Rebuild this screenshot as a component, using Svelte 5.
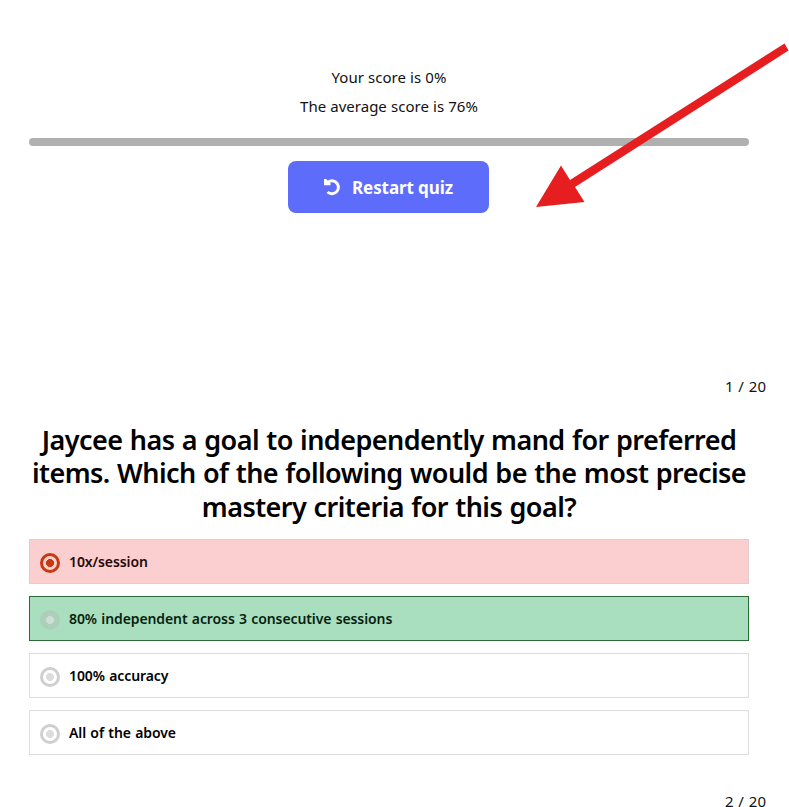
<script>
    let score = 0;
    let average = 76;
    let total = 20;

    let question = [
        'Jaycee has a goal to independently mand for preferred',
        'items. Which of the following would be the most precise',
        'mastery criteria for this goal?'
    ];

    let selected = 0;
    let answers = [
        { text: '10x/session', status: 'wrong' },
        { text: '80% independent across 3 consecutive sessions', status: 'correct' },
        { text: '100% accuracy', status: '' },
        { text: 'All of the above', status: '' }
    ];
</script>

<main class="quiz">
    <section class="results">
        <p>Your score is {score}%</p>
        <p>The average score is {average}%</p>
        <div class="progress"></div>
        <button class="restart">
            <svg width="18" height="18" viewBox="0 0 18 18" aria-hidden="true">
                <path d="M3.400 5.8A6.500 6.500 0 1 1 4.500 14" />
                <path class="head" d="M1 1h2.300l2 2.500 2.200 1.500v2.300H1z" />
            </svg>
            <span>Restart quiz</span>
        </button>
    </section>

    <div class="counter">1 / {total}</div>

    <section class="question">
        <h2>
            {#each question as line}
                <span>{line}</span>
            {/each}
        </h2>
        <div class="answers">
            {#each answers as answer, i}
                <label class="answer {answer.status}">
                    <input type="radio" name="q1" value={i} bind:group={selected} />
                    <span>{answer.text}</span>
                </label>
            {/each}
        </div>
    </section>

    <div class="counter next">2 / {total}</div>

    <svg class="arrow" width="789" height="220" viewBox="0 0 789 220" aria-hidden="true">
        <path d="M784.5 43.5 788.5 50.5 575 187 584.5 202 536 207 561 165.5 570 180z" />
    </svg>
</main>

<style>
    :global(body) {
        background: #fff;
        overflow: hidden;
    }

    .quiz {
        position: relative;
        box-sizing: border-box;
        width: 789px;
        height: 807px;
        padding: 63px 40px 0 29px;
        overflow: hidden;
        font-family: 'Segoe UI', 'Noto Sans', 'Open Sans', sans-serif;
        color: #111;
    }

    .results {
        display: flex;
        flex-direction: column;
        align-items: center;
        height: 309px;
    }
    .results p {
        margin: 0;
        font-size: 15px;
        line-height: 29px;
        word-spacing: 0.3px;
    }

    .progress {
        width: 100%;
        height: 8px;
        margin: 17px 0 15px;
        border-radius: 4px;
        background: #b0b0b0;
    }

    .restart {
        display: flex;
        align-items: center;
        justify-content: center;
        gap: 11px;
        width: 201px;
        height: 52px;
        margin-right: 2px;
        padding: 0;
        border: 0;
        border-radius: 8px;
        background: #5e6cfb;
        color: #fff;
        font: 700 17px 'Segoe UI', 'Noto Sans', 'Open Sans', sans-serif;
        letter-spacing: -0.1px;
    }
    .restart path {
        fill: none;
        stroke: #fff;
        stroke-width: 3;
    }
    .restart .head {
        fill: #fff;
        stroke: none;
    }

    .counter {
        height: 29px;
        margin-right: -17px;
        font-size: 15px;
        line-height: 29px;
        text-align: right;
        word-spacing: 1px;
    }

    .question h2 {
        margin: 22px 0 16px;
        color: #000;
        font-size: 27px;
        font-weight: 600;
        line-height: 33.4px;
        letter-spacing: -0.55px;
        word-spacing: 0.8px;
        text-align: center;
        white-space: nowrap;
    }
    .question h2 span {
        display: block;
    }

    .answers {
        display: flex;
        flex-direction: column;
        gap: 12px;
    }
    .answer {
        display: flex;
        align-items: center;
        gap: 9px;
        box-sizing: border-box;
        height: 45px;
        padding: 0 10px;
        border: 1px solid #ddd;
        color: #000;
        font-size: 14px;
        font-weight: 600;
        letter-spacing: -0.1px;
        word-spacing: 0.8px;
    }
    .answer input {
        appearance: none;
        box-sizing: border-box;
        width: 20px;
        height: 20px;
        margin: 3px 0 0;
        border: 3px solid #cfcfcf;
        border-radius: 50%;
        background: radial-gradient(circle, #dcdcdc 3.7px, transparent 4.3px);
    }
    .wrong {
        border-color: #e3cccc;
        background: #fbcfcf;
        color: #260808;
    }
    .wrong input {
        border-color: #c53a10;
        background: radial-gradient(circle, #c53a10 3.7px, transparent 4.3px);
    }
    .correct {
        border-color: #2c6b34;
        background: #a9dfbf;
        color: #071f10;
    }
    .correct input {
        border-color: #afcdbb;
        background: radial-gradient(circle, #d0ddd4 3.7px, #a9d3b9 4.3px);
    }

    .next {
        margin-top: 32px;
    }

    .arrow {
        position: absolute;
        top: 0;
        left: 0;
        fill: #e61e20;
        pointer-events: none;
    }
</style>
